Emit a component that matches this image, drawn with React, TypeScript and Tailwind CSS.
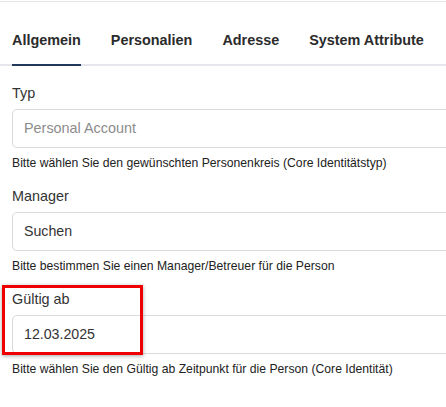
import React from "react";

const tabs = ["Allgemein", "Personalien", "Adresse", "System Attribute"];

function Field({
  label,
  value,
  placeholder,
  help,
  highlight,
}: {
  label: string;
  value?: string;
  placeholder?: string;
  help: string;
  highlight?: boolean;
}) {
  return (
    <div className="relative">
      <div className="text-[14.4px] leading-[20px] text-[#333333]">{label}</div>
      <div className="mt-[6px] flex h-[39px] w-[470px] items-center rounded-[5px] border border-[#d9d9dd] bg-white px-[11px]">
        {value ? (
          <span className="text-[14.2px] text-[#333333]">{value}</span>
        ) : (
          <span className="text-[14.4px] text-[#8c8c8c]">{placeholder}</span>
        )}
      </div>
      <div className="mt-[7px] text-[12.2px] leading-[16px] text-[#222222]">{help}</div>
      {highlight && (
        <div className="pointer-events-none absolute left-[-10px] top-[-4px] h-[70px] w-[141px] border-[3px] border-[#ee0000] shadow-[0_1px_4px_rgba(0,0,0,0.35)]" />
      )}
    </div>
  );
}

export default function App() {
  return (
    <div
      className="h-[407px] w-[446px] overflow-hidden bg-white"
      style={{ fontFamily: '"Liberation Sans", Arial, sans-serif' }}
    >
      <div className="mt-[1px] h-px w-full bg-[#e6e6e6]" />
      <div className="flex gap-[30px] pl-[12px] pt-[28px]">
        {tabs.map((t) => (
          <div
            key={t}
            className="pb-[14px] text-[14.4px] font-bold leading-[20px] text-[#2b2b2b]"
          >
            {t}
          </div>
        ))}
      </div>
      <div className="relative h-[2px] w-full bg-[#e6e6ec]">
        <div className="absolute left-[12px] top-0 h-[2px] w-[69px] bg-[#22385a]" />
      </div>
      <div className="flex flex-col gap-[15px] pl-[12px] pt-[17px]">
        <Field
          label="Typ"
          placeholder="Personal Account"
          help="Bitte wählen Sie den gewünschten Personenkreis (Core Identitätstyp)"
        />
        <Field
          label="Manager"
          value="Suchen"
          help="Bitte bestimmen Sie einen Manager/Betreuer für die Person"
        />
        <Field
          label="Gültig ab"
          value="12.03.2025"
          help="Bitte wählen Sie den Gültig ab Zeitpunkt für die Person (Core Identität)"
          highlight
        />
      </div>
    </div>
  );
}
